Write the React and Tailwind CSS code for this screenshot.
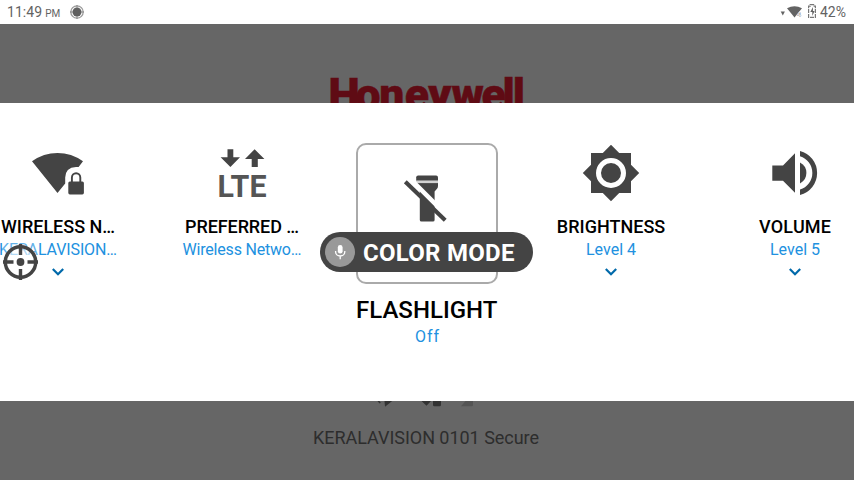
import React from 'react';

const INK = '#444444';

function Chevron() {
  return (
    <svg className="mt-[8px] block h-[10px] w-[16px]" viewBox="0 0 16 10">
      <path d="M2.8 2 L8 7.2 L13.2 2" fill="none" stroke="#0069aa" strokeWidth="2.2" />
    </svg>
  );
}

function WirelessIcon() {
  return (
    <svg className="block h-[64px] w-[80px]" viewBox="18 143 80 64" fill={INK}>
      <path d="M32 161.3 Q43.5 153 57.5 153 Q71.5 153 83 161.3 L78.6 167 H76 Q65.5 167.5 65.2 177.5 V183.6 L57.5 193 Z" />
      <path d="M71.9 182.5 V177.6 a4.2 4.4 0 0 1 8.4 0 V182.5" fill="none" stroke={INK} strokeWidth="1.9" />
      <rect x="68.3" y="181.4" width="15.6" height="13" rx="1.6" />
    </svg>
  );
}

function LteIcon() {
  return (
    <svg className="block h-[64px] w-[80px]" viewBox="202 143 80 64" fill={INK}>
      <path d="M227.5 149.3 h5.8 v8 h6.7 l-9.6 9.8 -9.8-9.8 h6.9z" />
      <path d="M254.6 149.3 l9.8 9.8 h-6.6 v8 h-6.1 v-8 h-6.7z" />
      <text x="217.5" y="197" fontFamily="Roboto" fontWeight="700" fontSize="30.5" fill="#555555" textLength="49" lengthAdjust="spacingAndGlyphs">LTE</text>
    </svg>
  );
}

function FlashlightIcon() {
  return (
    <svg className="block h-[60px] w-[60px]" viewBox="397 169 60 60" fill={INK}>
      <path d="M416.2 177.3 q0-1.9 1.9-1.9 h18 q1.9 0 1.9 1.9 v3.4 h-21.8z" />
      <path d="M416.2 183.1 H438 v2.8 q0 1.9-1.2 3 l-2.2 2.6 V219.9 q0 1.7-1.7 1.7 h-11.4 q-1.7 0-1.7-1.7 V191 l-2.6-3 q-1-1.2-1-3z" />
      <rect x="416.2" y="180.7" width="21.8" height="2.4" fill="#d2d2d2" />
      <path d="M411 179.6 L440 208.6" stroke="#ffffff" strokeWidth="4.4" />
      <path d="M405.3 181.8 L445.2 220.2" stroke={INK} strokeWidth="4.1" />
    </svg>
  );
}

function BrightnessIcon() {
  return (
    <svg className="block h-[64px] w-[80px]" viewBox="571 143 80 64">
      <path d="M611 144.8 L619.2 153 H631 V164.8 L639.2 173 L631 181.2 V193 H619.2 L611 201.2 L602.8 193 H591 V181.2 L582.8 173 L591 164.8 V153 H602.8 Z" fill={INK} />
      <circle cx="611" cy="173" r="12.5" fill="none" stroke="#ffffff" strokeWidth="5" />
    </svg>
  );
}

function VolumeIcon() {
  return (
    <svg className="block h-[64px] w-[80px]" viewBox="755 143 80 64" fill={INK}>
      <path d="M772.3 165.5 H783 L795 153.3 V192.7 L783 180.7 H772.3 Z" />
      <path d="M800 162.6 Q806.4 166 806.4 173 Q806.4 180 800 183.4 Z" />
      <path d="M800 151 A22.7 22.7 0 0 1 800 195 V189.6 A17.4 17.4 0 0 0 800 156.3 Z" />
    </svg>
  );
}

function Tile({ width, icon, title, titleWidth, value, valueWidth, chevron }) {
  return (
    <div className={`flex shrink-0 flex-col items-center pt-[40px] ${width}`}>
      {icon}
      <svg className="mt-[8px] block h-[23px] w-[130px] overflow-visible">
        <text x="65" y="18" textAnchor="middle" fontFamily="Roboto" fontWeight="500" fontSize="18" fill="#000000" textLength={titleWidth}>{title}</text>
      </svg>
      <svg className="block h-[21px] w-[130px] overflow-visible">
        <text x="65" y="17" textAnchor="middle" fontFamily="Roboto" fontSize="16" fill="#2191e0" textLength={valueWidth}>{value}</text>
      </svg>
      {chevron && <Chevron />}
    </div>
  );
}

function StatusBar() {
  return (
    <header className="flex h-[24px] items-center justify-between bg-white pr-[8px] pl-[7px] text-[14px] leading-[24px] text-[#636363]">
      <div className="flex items-center">
        <span className="tracking-[0.05px]">11:49</span>
        <span className="ml-[3px] pt-[3px] text-[10px]">PM</span>
        <svg className="ml-[9px] h-[16px] w-[16px]" viewBox="0 0 16 16">
          <circle cx="8" cy="8" r="6.2" fill="none" stroke="#9b9b9b" strokeWidth="1.3" />
          <circle cx="8" cy="8" r="4.5" fill="#606060" />
          <path d="M8 1v3M8 12v3M1 8h3M12 8h3" stroke="#858585" strokeWidth="1" />
        </svg>
      </div>
      <div className="flex items-center">
        <svg className="h-[24px] w-[40px]" viewBox="779 0 40 24">
          <path d="M780.7 11.6h4.2l-2.1 4z" fill="#636363" />
          <path d="M787 8.3 Q794.5 4 802 8.3 L794.5 17.4z" fill="#636363" />
          <text x="796.7" y="16.5" fontFamily="Roboto" fontSize="8" fontWeight="700" fill="#777777" stroke="#ffffff" strokeWidth="0.3">4</text>
          <path d="M810.2 4.7h3.4v1.4h1.8v11.2h-6.8V6.1h1.6z" fill="none" stroke="#777777" strokeWidth="1.2" strokeDasharray="4 0.8" />
          <path d="M813 7l-2.7 5h2v4l2.3-5h-1.7z" fill="#626262" />
        </svg>
        <span className="ml-[1px]">42%</span>
      </div>
    </header>
  );
}

function CursorTarget() {
  return (
    <svg className="absolute top-[243px] left-[2px] h-[38px] w-[38px]" viewBox="0 0 38 38">
      <circle cx="18.5" cy="19" r="17" fill="#ffffff" fillOpacity="0.5" />
      <rect x="0" y="0" width="37" height="14" fill="#ffffff" fillOpacity="0.3" />
      <circle cx="18.5" cy="19" r="15.2" fill="none" stroke={INK} strokeWidth="3.5" />
      <circle cx="18.5" cy="19" r="3.9" fill={INK} />
      <path d="M18.5 1v11M18.5 26v11M1 19h10.5M25.5 19h10.5" stroke={INK} strokeWidth="3.4" />
    </svg>
  );
}

function VoiceCommand() {
  return (
    <div className="absolute top-[232px] left-[320px] flex h-[40px] w-[213px] items-center rounded-full bg-[#444444] pl-[5px]">
      <div className="flex h-[30px] w-[30px] items-center justify-center rounded-full bg-[#999999]">
        <svg className="h-[18px] w-[14px]" viewBox="0 0 14 18">
          <rect x="4.8" y="2" width="4.8" height="8.6" rx="2.4" fill="#ffffff" />
          <path d="M2.6 8 v.7 a4.6 4.3 0 0 0 9.2 0 V8 M7.2 13v3.3" fill="none" stroke="#ffffff" strokeWidth="1.3" />
        </svg>
      </div>
      <svg className="ml-[8px] block h-[40px] w-[155px] overflow-visible">
        <text x="0" y="29" fontFamily="Roboto" fontWeight="700" fontSize="24" fill="#ffffff" textLength="151.5">COLOR MODE</text>
      </svg>
    </div>
  );
}

export default function App() {
  return (
    <div className="relative flex h-[480px] w-[854px] flex-col overflow-hidden bg-[#666666] font-['Roboto',sans-serif]">
      <StatusBar />
      <div className="flex h-[79px] shrink-0 justify-center overflow-hidden">
        <svg className="block h-[79px] w-[210px]" viewBox="322 24 210 79">
          <text x="328.6 355.6 379.3 404.8 428.3 451.5 481.5 502.6 512.8" y="109.5" fontFamily="Roboto" fontWeight="900" fontSize="44.5" fill="#5f0b14" stroke="#5f0b14" strokeWidth="0.5">Honeywell</text>
        </svg>
      </div>
      <main className="flex h-[298px] shrink-0 overflow-hidden bg-white">
        <div className="ml-[-34px] flex shrink-0">
          <Tile width="w-[184px]" icon={<WirelessIcon />} title="WIRELESS N…" titleWidth="114" value="KERALAVISION…" valueWidth="118" chevron />
          <Tile width="w-[184px]" icon={<LteIcon />} title="PREFERRED …" titleWidth="114" value="Wireless Netwo…" valueWidth="119" />
          <div className="ml-[1px] flex w-[184px] shrink-0 flex-col items-center pt-[40px]">
            <div className="flex h-[141px] w-[142px] justify-center rounded-[10px] border-2 border-[#aaaaaa] pt-[24px]">
              <FlashlightIcon />
            </div>
            <svg className="mt-[8px] block h-[34px] w-[160px]">
              <text x="79.7" y="26" textAnchor="middle" fontFamily="Roboto" fontWeight="500" fontSize="24" fill="#000000" textLength="141.5">FLASHLIGHT</text>
            </svg>
            <svg className="block h-[22px] w-[60px]">
              <text x="30" y="16" textAnchor="middle" fontFamily="Roboto" fontSize="16" fill="#2191e0" textLength="24">Off</text>
            </svg>
          </div>
          <Tile width="w-[184px]" icon={<BrightnessIcon />} title="BRIGHTNESS" titleWidth="108.5" value="Level 4" valueWidth="50" chevron />
          <Tile width="w-[184px]" icon={<VolumeIcon />} title="VOLUME" titleWidth="72" value="Level 5" valueWidth="50" chevron />
        </div>
      </main>
      <footer className="flex h-[79px] shrink-0 flex-col items-center">
        <svg className="block h-[8px] w-[120px]" viewBox="367 401 120 8" fill="#333333">
          <path d="M377.5 401h2l1.3 1.7-1.3.7zM384.5 401h7.7l-7.2 5.7zM421.5 401h9.5l-4.5 4.7zM433 401h8v4q0 1.3-1.3 1.3h-5.4q-1.3 0-1.3-1.3z" />
          <path d="M465.5 401h7.5v4q0 1.3-1.3 1.3H461z" fill="#545454" />
        </svg>
        <svg className="mt-[17px] block h-[30px] w-[240px]">
          <text x="119" y="18" textAnchor="middle" fontFamily="Roboto" fontSize="18" fill="#2d2d2d" textLength="226">KERALAVISION 0101 Secure</text>
        </svg>
      </footer>
      <VoiceCommand />
      <CursorTarget />
    </div>
  );
}
